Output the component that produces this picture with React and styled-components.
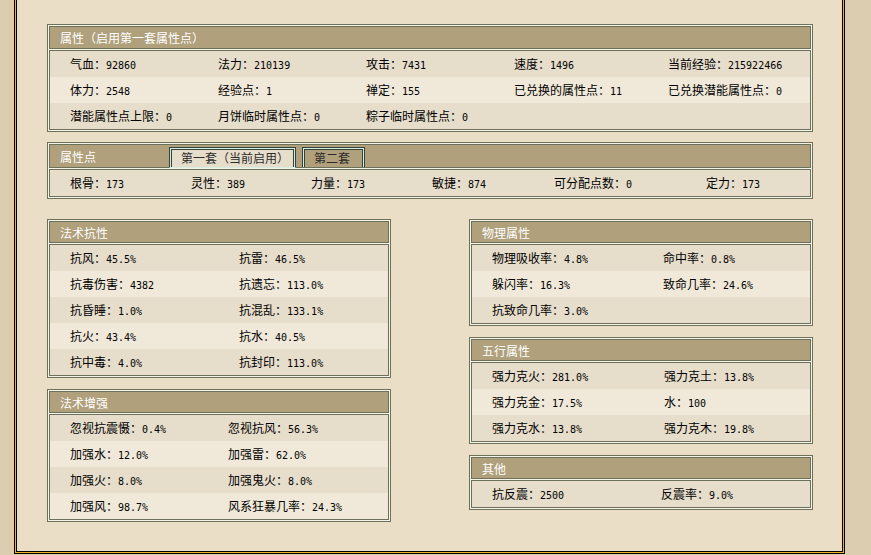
import styled, { createGlobalStyle } from "styled-components";

const GlobalStyle = createGlobalStyle`
  html, body {
    margin: 0;
    padding: 0;
  }
  body {
    background: #dccdb0;
    font-family: "Noto Sans CJK SC", "Noto Sans", sans-serif;
    font-size: 12px;
    color: #000;
  }
`;

// black / gold / black frame, open at the top
const Frame = styled.div`
  box-sizing: border-box;
  width: 831px;
  height: 554px;
  margin-left: 14px;
  border: 1px solid #000;
  border-top: none;
  padding: 0 1px 1px;
  background: #f0b424;
`;

const Inner = styled.div`
  box-sizing: border-box;
  height: 100%;
  border: 1px solid #000;
  border-top: none;
  background: #eadfc6;
  padding: 24px 29px 0 30px;
  display: flex;
  flex-direction: column;
`;

const Columns = styled.div`
  display: grid;
  grid-template-columns: 344px 344px;
  justify-content: space-between;
  align-items: start;
  margin-top: 20px;
`;

const Column = styled.div`
  display: flex;
  flex-direction: column;
  gap: 11px;
`;

const Panel = styled.section`
  border: 1px solid #6c715a;
  padding: 1px;
  background: #f7f3e8;
  display: flex;
  flex-direction: column;
  gap: 1px;
  margin-top: ${(p) => p.$top || 0}px;
`;

const Header = styled.div`
  height: ${(p) => p.$h || 20}px;
  border: 1px solid #6c715a;
  background: #b0a07b;
  color: #fff;
  font-size: 12px;
  padding-left: 10px;
  display: flex;
  align-items: center;
`;

const HeaderTitle = styled.span`
  width: 109px;
  flex-shrink: 0;
`;

const TabBar = styled.div`
  align-self: flex-end;
  display: flex;
  align-items: flex-end;
  gap: 6px;
`;

const Tab = styled.div`
  box-sizing: border-box;
  width: ${(p) => p.$w}px;
  height: ${(p) => (p.$active ? 21 : 20)}px;
  margin-bottom: ${(p) => (p.$active ? -1 : 0)}px;
  border: 1px solid #34433a;
  border-bottom: ${(p) => (p.$active ? "1px solid #d4ece2" : "none")};
  box-shadow: inset 1px 1px 0 #d4ece2, inset -1px 0 0 #d4ece2,
    inset 2px 2px 0 #34433a, inset -2px 0 0 #34433a;
  background: ${(p) => (p.$active ? "#e7ddcb" : "#b0a07b")};
  color: #2b2b2b;
  font-size: 12px;
  padding-left: 11px;
  display: flex;
  align-items: center;
  white-space: nowrap;
  position: relative;
`;

const Body = styled.div`
  border: 1px solid #6c715a;
`;

const Row = styled.div`
  display: grid;
  grid-template-columns: ${(p) => p.$cols};
  align-items: center;
  height: 26px;
  padding-left: 20px;
  background: #e7ddcb;

  &:nth-child(even) {
    background: #f0e9d9;
  }
`;

const Cell = styled.div`
  white-space: nowrap;
  line-height: 26px;
`;

const Value = styled.span`
  font-family: "DejaVu Sans Mono", "Liberation Mono", monospace;
  font-size: 10px;
`;

const Stat = ({ label, value }) => (
  <Cell>
    {label}：<Value>{value}</Value>
  </Cell>
);

const StatRows = ({ cols, rows }) => (
  <Body>
    {rows.map((row, i) => (
      <Row key={i} $cols={cols}>
        {row.map(([l, v]) => (
          <Stat key={l} label={l} value={v} />
        ))}
      </Row>
    ))}
  </Body>
);

const StatPanel = ({ title, cols, rows, h, top }) => (
  <Panel $top={top}>
    <Header $h={h}>{title}</Header>
    <StatRows cols={cols} rows={rows} />
  </Panel>
);

const base = [
  [["气血", "92860"], ["法力", "210139"], ["攻击", "7431"], ["速度", "1496"], ["当前经验", "215922466"]],
  [["体力", "2548"], ["经验点", "1"], ["禅定", "155"], ["已兑换的属性点", "11"], ["已兑换潜能属性点", "0"]],
  [["潜能属性点上限", "0"], ["月饼临时属性点", "0"], ["粽子临时属性点", "0"]],
];

const points = [
  [["根骨", "173"], ["灵性", "389"], ["力量", "173"], ["敏捷", "874"], ["可分配点数", "0"], ["定力", "173"]],
];

const resist = [
  [["抗风", "45.5%"], ["抗雷", "46.5%"]],
  [["抗毒伤害", "4382"], ["抗遗忘", "113.0%"]],
  [["抗昏睡", "1.0%"], ["抗混乱", "133.1%"]],
  [["抗火", "43.4%"], ["抗水", "40.5%"]],
  [["抗中毒", "4.0%"], ["抗封印", "113.0%"]],
];

const boost = [
  [["忽视抗震慑", "0.4%"], ["忽视抗风", "56.3%"]],
  [["加强水", "12.0%"], ["加强雷", "62.0%"]],
  [["加强火", "8.0%"], ["加强鬼火", "8.0%"]],
  [["加强风", "98.7%"], ["风系狂暴几率", "24.3%"]],
];

const physical = [
  [["物理吸收率", "4.8%"], ["命中率", "0.8%"]],
  [["躲闪率", "16.3%"], ["致命几率", "24.6%"]],
  [["抗致命几率", "3.0%"]],
];

const elements = [
  [["强力克火", "281.0%"], ["强力克土", "13.8%"]],
  [["强力克金", "17.5%"], ["水", "100"]],
  [["强力克水", "13.8%"], ["强力克木", "19.8%"]],
];

const other = [[["抗反震", "2500"], ["反震率", "9.0%"]]];

export default function App() {
  return (
    <>
      <GlobalStyle />
      <Frame>
        <Inner>
          <StatPanel
            title="属性（启用第一套属性点）"
            h={21}
            cols="148px 148px 148px 154px 1fr"
            rows={base}
          />

          <Panel $top={10}>
            <Header $h={22}>
              <HeaderTitle>属性点</HeaderTitle>
              <TabBar>
                <Tab $w={127} $active>
                  第一套（当前启用）
                </Tab>
                <Tab $w={63}>第二套</Tab>
              </TabBar>
            </Header>
            <StatRows cols="121px 120px 121px 122px 152px 1fr" rows={points} />
          </Panel>

          <Columns>
            <Column>
              <StatPanel title="法术抗性" cols="169px 1fr" rows={resist} />
              <StatPanel title="法术增强" cols="158px 1fr" rows={boost} />
            </Column>
            <Column>
              <StatPanel title="物理属性" cols="171px 1fr" rows={physical} />
              <StatPanel title="五行属性" cols="172px 1fr" rows={elements} />
              <StatPanel title="其他" cols="169px 1fr" rows={other} />
            </Column>
          </Columns>
        </Inner>
      </Frame>
    </>
  );
}
